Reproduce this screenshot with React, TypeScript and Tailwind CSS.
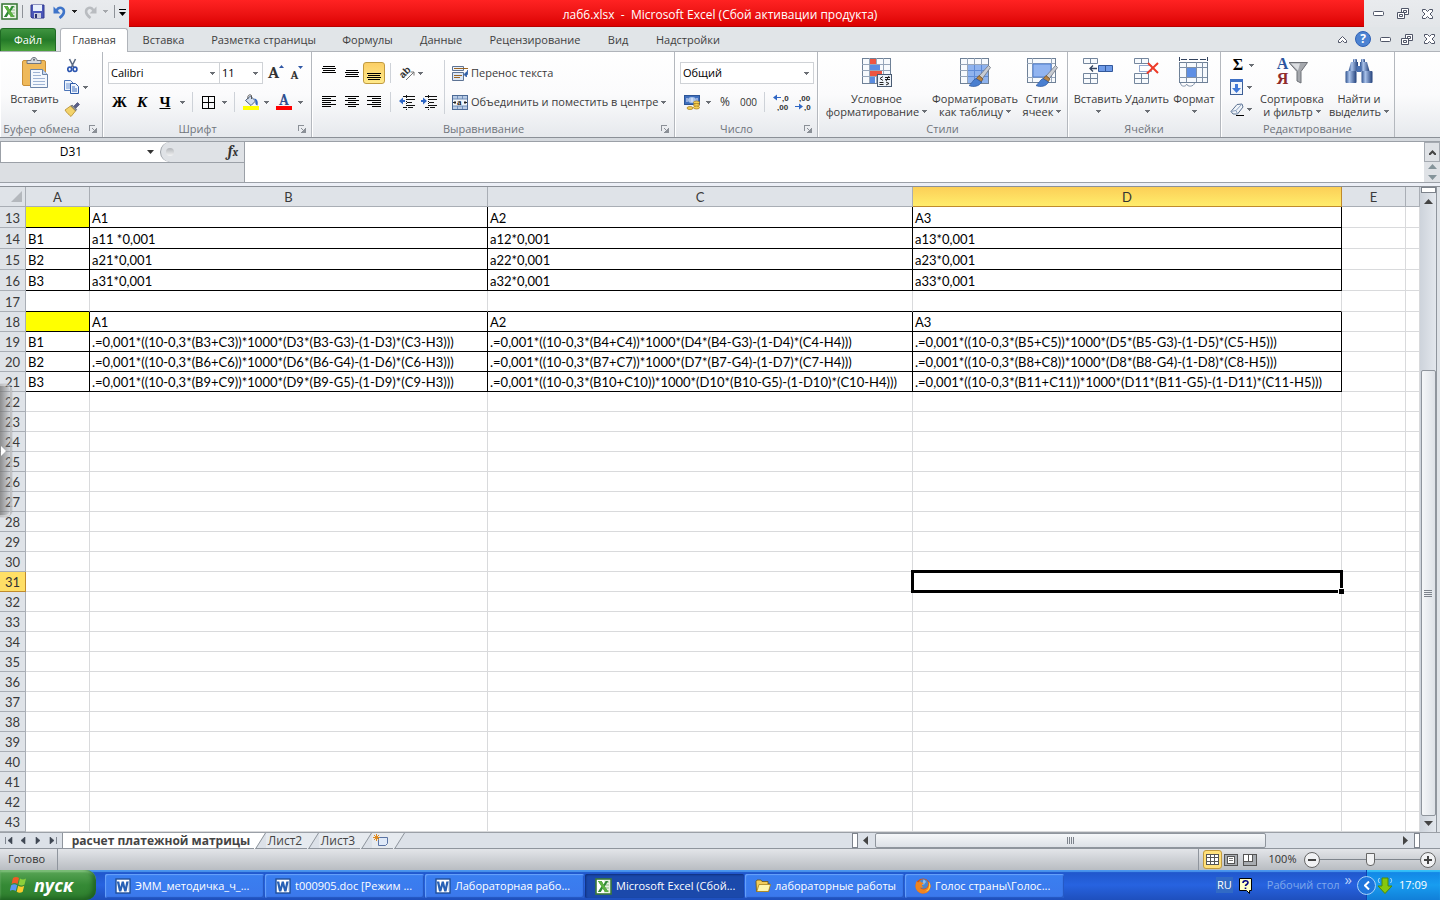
import React from "react";
import clsx from "clsx";

interface SheetRow {
  num: number;
  bordered?: boolean;
  cells?: string[];
}

const COLUMNS = ["A", "B", "C", "D", "E", ""];

const ROWS: SheetRow[] = [
  { num: 13, bordered: true, cells: ["", "A1", "A2", "A3"] },
  { num: 14, bordered: true, cells: ["B1", "a11 *0,001", "a12*0,001", "a13*0,001"] },
  { num: 15, bordered: true, cells: ["B2", "a21*0,001", "a22*0,001", "a23*0,001"] },
  { num: 16, bordered: true, cells: ["B3", "a31*0,001", "a32*0,001", "a33*0,001"] },
  { num: 17 },
  { num: 18, bordered: true, cells: ["", "A1", "A2", "A3"] },
  {
    num: 19,
    bordered: true,
    cells: [
      "B1",
      ".=0,001*((10-0,3*(B3+C3))*1000*(D3*(B3-G3)-(1-D3)*(C3-H3)))",
      ".=0,001*((10-0,3*(B4+C4))*1000*(D4*(B4-G3)-(1-D4)*(C4-H4)))",
      ".=0,001*((10-0,3*(B5+C5))*1000*(D5*(B5-G3)-(1-D5)*(C5-H5)))",
    ],
  },
  {
    num: 20,
    bordered: true,
    cells: [
      "B2",
      ".=0,001*((10-0,3*(B6+C6))*1000*(D6*(B6-G4)-(1-D6)*(C6-H3)))",
      ".=0,001*((10-0,3*(B7+C7))*1000*(D7*(B7-G4)-(1-D7)*(C7-H4)))",
      ".=0,001*((10-0,3*(B8+C8))*1000*(D8*(B8-G4)-(1-D8)*(C8-H5)))",
    ],
  },
  {
    num: 21,
    bordered: true,
    cells: [
      "B3",
      ".=0,001*((10-0,3*(B9+C9))*1000*(D9*(B9-G5)-(1-D9)*(C9-H3)))",
      ".=0,001*((10-0,3*(B10+C10))*1000*(D10*(B10-G5)-(1-D10)*(C10-H4)))",
      ".=0,001*((10-0,3*(B11+C11))*1000*(D11*(B11-G5)-(1-D11)*(C11-H5)))",
    ],
  },
  ...Array.from({ length: 22 }, (_, i) => ({ num: 22 + i })),
];

const RIBBON_TABS = [
  { label: "Вставка", width: "w-[69px]" },
  { label: "Разметка страницы", width: "w-[131px]" },
  { label: "Формулы", width: "w-[77px]" },
  { label: "Данные", width: "w-[70px]" },
  { label: "Рецензирование", width: "w-[118px]" },
  { label: "Вид", width: "w-[48px]" },
  { label: "Надстройки", width: "w-[92px]" },
];

// ---------- Icons ----------

const Caret = ({ className = "text-[#6b6f75]" }: { className?: string }) => (
  <svg width="5" height="3" viewBox="0 0 5 3" className={clsx("shrink-0", className)} shapeRendering="crispEdges">
    <path d="M0 0h5v1h-1v1h-1v1h-1v-1h-1v-1h-1z" fill="currentColor" />
  </svg>
);

const ExcelIcon = () => (
  <svg width="17" height="17" viewBox="0 0 17 17" className="shrink-0">
    <rect x="1" y="1" width="15" height="15" fill="#fff" stroke="#3c7a3a" strokeWidth="1.6" />
    <path d="M9 2h6v13H9z" fill="#e6f1e1" />
    <path d="M11 4h3M11 7h3M11 10h3M11 13h3" stroke="#8fb98a" />
    <path d="M3 3h3.600l2 3.400L10.600 3h2.600L9.800 8.400l3.600 5.600H10L7.900 10.600 5.800 14H2.800l3.700-5.700z" fill="#2f8a35" />
    <path d="M3 3h3.400l7 11H10z" fill="#5db142" />
  </svg>
);

const WordIcon = () => (
  <svg width="16" height="16" viewBox="0 0 16 16" className="shrink-0">
    <rect x="1" y="1" width="14" height="14" fill="#fff" stroke="#1f4f9b" strokeWidth="1.400" />
    <path d="M13 4h1.500M13 6h1.500M13 8h1.500M13 10h1.500M13 12h1.500" stroke="#9db9df" />
    <path d="M1.800 3.500h2.500l1 5.500L6.700 3.500h2.200L10.200 9l1.100-5.500h2.300L11.500 13.500H9.200L7.800 8.300 6.300 13.500H4z" fill="#2660b5" />
  </svg>
);

const FolderIcon = () => (
  <svg width="16" height="16" viewBox="0 0 16 16" className="shrink-0">
    <path d="M1 3.500 2 2h4l1 1.500h6V6h2l-1.500 7.500H1.500z" fill="#f3cd5a" stroke="#6b5210" strokeWidth=".8" />
    <path d="M4 6.500h11.500L13.500 13.500H1.800z" fill="#fff6ae" stroke="#a8811c" strokeWidth=".8" />
  </svg>
);

const FirefoxIcon = () => (
  <svg width="16" height="16" viewBox="0 0 16 16" className="shrink-0">
    <circle cx="8" cy="8" r="7.500" fill="#d9520c" />
    <circle cx="8.500" cy="6" r="4.800" fill="#4a86cf" />
    <path d="M8.500 1.500c1.500.5 2.500 1.500 2.300 3-.8.300-1.300 1-1.300 1.800L7 7z" fill="#8fc0ee" />
    <path d="M1.500 3c-.5 2-1.500 4-.8 7C1.700 13.500 5 15.500 8.500 15.500c4 0 7-3.500 7-7.500 0-2-1-4-2-4.500 .8 3.500-.5 7.500-4.500 8-2 .2-3.500-.8-4-2 1 .3 2.500.2 3.500-.8-1.500-.2-2-1-1.500-2 .4-.7 1.500-.8 1.800-1.700C7 4.500 6 4.500 5.500 3.500 4.500 3.500 4 4 3.500 4.300 2.500 4.300 1.800 3.800 1.500 3z" fill="#ef8420" />
    <path d="M13.500 4c1.500 3 .8 8-3.500 9.500 3.500 0 5.300-3 5.300-5.500 0-1.700-.8-3.500-1.800-4z" fill="#fbd04a" />
  </svg>
);

const SaveIcon = () => (
  <svg width="15" height="15" viewBox="0 0 15 15">
    <path d="M1 1h13v13H2L1 13z" fill="#4a56b8" stroke="#323b8f" />
    <rect x="3" y="1" width="9" height="6" fill="#e8f0fb" />
    <rect x="4" y="9" width="7" height="5" fill="#c9cede" />
    <rect x="5" y="10" width="2" height="4" fill="#2b3270" />
  </svg>
);

const UndoIcon = ({ redo }: { redo?: boolean }) => (
  <svg width="13" height="14" viewBox="0 0 13 14" className={redo ? "-scale-x-100" : ""}>
    <path d="M3.500 5.500C6 1 11.500 2.500 10.800 7.500 10.500 10 8.500 11.500 6.500 13" fill="none" stroke={redo ? "#b9bcc0" : "#3e74c9"} strokeWidth="2.600" />
    <path d="M.5 1.500v7h7z" fill={redo ? "#b9bcc0" : "#3e74c9"} />
  </svg>
);

const PasteIcon = () => (
  <svg width="28" height="32" viewBox="0 0 28 32">
    <rect x="1.500" y="3.500" width="23" height="25" rx="1.500" fill="#efb95a" stroke="#c98f36" />
    <path d="M6 6.500v-3h4c0-4 6-4 6 0h4v3z" fill="#d5d9df" stroke="#6f7680" />
    <circle cx="13" cy="2.800" r="1" fill="#5b616b" />
    <path d="M9.500 12.500h12l5 5v13h-17z" fill="#f4f8fd" stroke="#6b84a8" />
    <path d="M21.500 12.500v5h5" fill="#c9d8ee" stroke="#6b84a8" />
    <path d="M12 15.500h7M12 18.500h8M12 21.500h12M12 24.500h12M12 27.500h12" stroke="#9fb4d4" />
  </svg>
);

const CutIcon = () => (
  <svg width="11" height="15" viewBox="0 0 11 15">
    <path d="M2.500 1l4.500 9M8.500 1L4 10" stroke="#5b6b84" strokeWidth="1.600" />
    <ellipse cx="2.700" cy="11.300" rx="1.900" ry="2.200" fill="none" stroke="#2c56b0" strokeWidth="1.700" />
    <ellipse cx="8" cy="11.300" rx="1.900" ry="2.200" fill="none" stroke="#2c56b0" strokeWidth="1.700" />
  </svg>
);

const CopyIcon = () => (
  <svg width="16" height="14" viewBox="0 0 16 14">
    <path d="M.5.500h6l2.500 2.500v7.500H.5z" fill="#eef4fc" stroke="#4d75b8" />
    <path d="M2 4h4M2 6h4M2 8h4" stroke="#6f95d3" />
    <path d="M6.500 3.500h5l3 3v7h-8z" fill="#eef4fc" stroke="#2d5aa8" />
    <path d="M8 7h3M8 9h5M8 11h5" stroke="#3e6fc0" />
  </svg>
);

const BrushIcon = () => (
  <svg width="16" height="15" viewBox="0 0 16 15">
    <path d="M10 4l3.500-3.500 2 2L12 6z" fill="#5a5f8a" stroke="#3c4060" strokeWidth=".6" />
    <path d="M6.500 4l2-.7 4 4-1 1.800z" fill="#8d93a2" stroke="#454a58" strokeWidth=".7" />
    <path d="M1 8l5.500-4 5 5-4.500 5.500C5 12.500 3 11.500 1 8z" fill="#f3d36b" stroke="#b48a2b" strokeWidth=".8" />
  </svg>
);

const FontSizeIcon = ({ shrink }: { shrink?: boolean }) => (
  <span className="flex items-start">
    <span className={clsx("font-serif font-bold text-[#333]", shrink ? "pt-[4px] text-[12px] leading-[14px]" : "text-[17px] leading-[20px]")}>A</span>
    <svg width="5" height="3" viewBox="0 0 5 3" className={clsx("mt-[2px]", shrink && "rotate-180")}>
      <path d="M0 3 2.500 0 5 3z" fill="#2f57a5" />
    </svg>
  </span>
);

const BordersIcon = () => (
  <svg width="13" height="13" viewBox="0 0 13 13" shapeRendering="crispEdges">
    <path d="M.5.500h12v12H.5zM6.500 0v13M0 6.500h13" fill="none" stroke="#000" />
  </svg>
);

const FillIcon = () => (
  <svg width="16" height="16" viewBox="0 0 16 16">
    <path d="M2.500 6.500 7.500 2l5 5L8 11.500z" fill="#d3deee" stroke="#4a5f80" />
    <path d="M5 5c-1-4 2-5 3.500-3.500V5" fill="none" stroke="#555" />
    <path d="M11 4.500c3 0 4.500 3 3.500 7-2-.5-2.500-2-2-4.500z" fill="#3468bd" />
    <rect y="12" width="16" height="4" fill="#ff0" />
  </svg>
);

const FontColorIcon = () => (
  <span className="flex w-[16px] flex-col items-center">
    <span className="font-serif text-[15px] font-bold leading-[12px] text-[#2f4f8f]">A</span>
    <span className="h-[4px] w-full bg-[#f00]" />
  </span>
);

const LINES = {
  top: "M1 .5h12M0 2.500h14M1 4.500h12M0 6.500h14",
  middle: "M1 4.500h12M0 6.500h14M1 8.500h12M0 10.500h14",
  bottom: "M0 7.500h14M1 9.500h12M0 11.500h14M1 13.500h12",
  left: "M0 1.500h14M0 3.500h9M0 5.500h14M0 7.500h9M0 9.500h14M0 11.500h9",
  center: "M0 1.500h14M3 3.500h8M0 5.500h14M3 7.500h8M0 9.500h14M3 11.500h8",
  right: "M0 1.500h14M5 3.500h9M0 5.500h14M5 7.500h9M0 9.500h14M5 11.500h9",
};

const LinesIcon = ({ kind }: { kind: keyof typeof LINES }) => (
  <svg width="14" height="14" viewBox="0 0 14 14" shapeRendering="crispEdges">
    <path d={LINES[kind]} stroke="#000" />
  </svg>
);

const IndentIcon = ({ increase }: { increase?: boolean }) => (
  <svg width="16" height="15" viewBox="0 0 16 15">
    <path d="M4 1.500h12M8 4.500h8M8 7.500h5M8 10.500h8M4 12.500h4M9 12.500h5" stroke="#111" strokeWidth="1.500" shapeRendering="crispEdges" />
    <path d="M7.500 0v15" stroke="#111" strokeDasharray="1 1" />
    <path d={increase ? "M0 5h2V2.500L6 6 2 9.500V7H0z" : "M6 5H4V2.500L0 6l4 3.500V7h2z"} fill="#2f66c4" />
  </svg>
);

const OrientationIcon = () => (
  <svg width="16" height="16" viewBox="0 0 16 16">
    <text x="0" y="12" fontSize="10" fontWeight="bold" fontFamily="Liberation Sans, sans-serif" transform="rotate(-45 4 8)" fill="#333">ab</text>
    <path d="M7 15l8-8M15 10.500V7h-3.500" fill="none" stroke="#777" />
  </svg>
);

const WrapIcon = () => (
  <svg width="16" height="15" viewBox="0 0 16 15">
    <path d="M.5.500h11v4H.5z" fill="#eaf1fa" stroke="#5d7394" />
    <path d="M2 2.500h14" stroke="#9a6524" />
    <path d="M.5 6.500h11v8H.5z" fill="#dbe7f6" stroke="#5d7394" />
    <path d="M2 9.500h8M2 11.500h6" stroke="#9a6524" />
    <path d="M15.500 4v4.500H13M14.500 6v5L12 8.500z" stroke="#2f5fa8" fill="#2f5fa8" strokeWidth=".8" />
  </svg>
);

const MergeIcon = () => (
  <svg width="16" height="15" viewBox="0 0 16 15">
    <rect x=".5" y=".5" width="15" height="14" fill="#b9cce6" stroke="#4c6a96" />
    <path d="M1 4h14v7H1z" fill="#f2f6fb" />
    <path d="M5.500 1v3M10.500 1v3M5.500 11v3M10.500 11v3M1 4h14M1 11h14" stroke="#6f8db8" />
    <text x="5" y="10" fontSize="9" fontWeight="bold" fontFamily="Liberation Serif, serif" fill="#222">a</text>
    <path d="M1 7.500h3M12 7.500h3M3 6v3M13 6v3" stroke="#222" />
  </svg>
);

const MoneyIcon = () => (
  <svg width="17" height="17" viewBox="0 0 17 17">
    <rect x=".5" y="1.500" width="15" height="9" fill="#3f6fbd" stroke="#2d5596" />
    <ellipse cx="8" cy="6" rx="4" ry="3" fill="#a9c4ea" />
    <path d="M3 4v4M8 4v4M13 4v4" stroke="#eef" />
    <ellipse cx="12.500" cy="8.500" rx="3" ry="1.500" fill="#f4cf55" stroke="#a87a16" strokeWidth=".7" />
    <ellipse cx="12.500" cy="11" rx="3" ry="1.500" fill="#f4cf55" stroke="#a87a16" strokeWidth=".7" />
    <ellipse cx="12.500" cy="13.500" rx="3" ry="1.500" fill="#f4cf55" stroke="#a87a16" strokeWidth=".7" />
    <ellipse cx="6" cy="14" rx="3" ry="1.500" fill="#f4cf55" stroke="#a87a16" strokeWidth=".7" />
  </svg>
);

const DecimalIcon = ({ less }: { less?: boolean }) => (
  <svg width="17" height="17" viewBox="0 0 17 17" fontFamily="Liberation Sans, sans-serif" fontSize="8" fontWeight="bold" fill="#333">
    <text x={less ? "4" : "9"} y="7">{less ? ",00" : ",0"}</text>
    <text x={less ? "9" : "4"} y="16">{less ? ",0" : ",00"}</text>
    <path d={less ? "M0 12h4V9.500l4 3-4 3V13H0z" : "M8 3H4V.5l-4 3 4 3V4h4z"} fill="#2f66c4" />
  </svg>
);

const GridBase = () => (
  <>
    <rect x="1.500" y="1.500" width="28" height="25" fill="#f7fafd" stroke="#6f8197" />
    <path d="M1 7.500h28M1 13.500h28M1 19.500h28M8.500 1v25M15.500 1v25M22.500 1v25" stroke="#97a6ba" />
  </>
);

const Brush = () => (
  <>
    <path d="M29.500 8.500l2 2-8 11-3.500-2.500z" fill="#c8ccd2" stroke="#6d7480" strokeWidth=".8" />
    <path d="M20 18.500l4 3.500-2 3-5-3z" fill="#b78445" stroke="#6e4b1e" strokeWidth=".7" />
    <path d="M17 21.500c-3 1-4 5-7 7 4 2 10.500 1 12.500-3.500z" fill="#4a7fd0" stroke="#2a559c" strokeWidth=".7" />
  </>
);

const ConditionalIcon = () => (
  <svg width="32" height="30" viewBox="0 0 32 30">
    <GridBase />
    <path d="M9 2h6v5H9zM9 14h12v5H9z" fill="#ee5540" />
    <path d="M9 8h10v5H9zM9 20h5v6H9z" fill="#5a8ce0" />
    <rect x="16.500" y="17.500" width="14" height="12" fill="#eef3f9" stroke="#4a5b72" />
    <path d="M22 19.500l-3 2 3 2M18.500 25.500h4M18.500 27.500h4M24 20.500h5M24 22.500h5M28 19l-3 5M25 25l3 1.500-3 1.500" fill="none" stroke="#222" />
  </svg>
);

const FormatTableIcon = () => (
  <svg width="32" height="30" viewBox="0 0 32 30">
    <GridBase />
    <path d="M9 8h20v18H9z" fill="#8fb3ee" />
    <path d="M9 13.500h20M9 19.500h20M15.500 8v18M22.500 8v18" stroke="#5f8bd6" />
    <Brush />
  </svg>
);

const CellStylesIcon = () => (
  <svg width="32" height="30" viewBox="0 0 32 30">
    <rect x="1.500" y="1.500" width="28" height="24" fill="#f7fafd" stroke="#6f8197" />
    <path d="M1 6.500h28M1 20.500h28M6.500 1v24M25.500 1v24" stroke="#97a6ba" />
    <path d="M7 7h18v13H7z" fill="#91b4f0" stroke="#4f7fd0" />
    <Brush />
  </svg>
);

const TwoTables = () => (
  <path d="M1.500 1.500h14v5h-14zM8.500 1.500v5M1.500 16.500h14v10h-14zM8.500 16.500v10M1.500 21.500h14" fill="#f7fafd" stroke="#74869d" />
);

const InsertCellsIcon = () => (
  <svg width="32" height="30" viewBox="0 0 32 30">
    <TwoTables />
    <path d="M16.500 8.500h14v6h-14z" fill="#6f9be8" stroke="#33599c" />
    <path d="M23.500 9v5" stroke="#33599c" />
    <path d="M15 11.500H8M11 8.500l-3 3 3 3" fill="none" stroke="#33435e" strokeWidth="1.300" />
  </svg>
);

const DeleteCellsIcon = () => (
  <svg width="28" height="30" viewBox="0 0 28 30">
    <TwoTables />
    <path d="M6.500 8.500h12v6h-12z" fill="none" stroke="#2d55a0" strokeDasharray="1 1" />
    <path d="M15 6l10 10M25 6L14 16.500" stroke="#ee3b28" strokeWidth="2" />
  </svg>
);

const FormatCellsIcon = () => (
  <svg width="32" height="31" viewBox="0 0 32 31">
    <path d="M1.500 0v4M29.500 0v4M3 2.500h6M11 2.500h9M22 2.500h6" stroke="#33435e" />
    <rect x="1.500" y="5.500" width="28" height="20" fill="#f7fafd" stroke="#6f8197" />
    <path d="M1 10.500h28M1 20.500h28M8.500 5v20M18.500 5v20M24.500 5v20M2.500 26c0 4 6 4 6 1 1 3 7 3 8-1" fill="none" stroke="#7f90a7" />
    <path d="M9 11h9v9H9z" fill="#5e8fe4" />
  </svg>
);

const FillDownIcon = () => (
  <svg width="14" height="16" viewBox="0 0 14 16">
    <rect x=".5" y=".5" width="12" height="15" fill="#f0f5fc" stroke="#3d5f95" />
    <path d="M0 0h13v3H0z" fill="#3d6fc4" />
    <path d="M5 5h3v4h3l-4.500 5L2 9h3z" fill="#3f78d8" />
  </svg>
);

const EraserIcon = () => (
  <svg width="15" height="13" viewBox="0 0 15 13">
    <path d="M1 8.500 7 1.500l5-.5 1 3L7.500 11H3z" fill="#f1f5fa" stroke="#5c7291" />
    <path d="M1 8.500l5-1L12 1M6 7.500 7.500 11" fill="none" stroke="#8ba0bf" />
    <path d="M6 12.500h8" stroke="#000" />
  </svg>
);

const SortIcon = () => (
  <span className="flex h-[30px] w-[32px]">
    <span className="flex w-[13px] flex-col items-center font-serif text-[16px] font-bold leading-[15px]">
      <span className="text-[#2b559f]">А</span>
      <span className="text-[#8f2b2b]">Я</span>
    </span>
    <svg width="19" height="28" viewBox="0 0 19 28">
      <path d="M0 5.500h18.500L12 14.500V26l-4-2V14.500z" fill="#a5a8ad" stroke="#6d7076" />
      <path d="M2 6.500h9l-2 7z" fill="#dcdee1" />
    </svg>
  </span>
);

const BinocularsIcon = () => (
  <svg width="30" height="30" viewBox="0 0 30 30">
    <defs>
      <linearGradient id="lens" x1="0" x2="1">
        <stop offset="0" stopColor="#2f528e" />
        <stop offset=".35" stopColor="#a9c2ea" />
        <stop offset="1" stopColor="#22407a" />
      </linearGradient>
    </defs>
    <rect x="9" y="2" width="4" height="4" rx="1" fill="url(#lens)" />
    <rect x="17" y="2" width="4" height="4" rx="1" fill="url(#lens)" />
    <path d="M7 5h7v9H4.500z" fill="url(#lens)" />
    <path d="M16 5h7l2.500 9H16z" fill="url(#lens)" />
    <rect x="12.500" y="9" width="5" height="6" fill="#4a70b0" />
    <rect x="1.500" y="14" width="11" height="12" rx="1" fill="url(#lens)" />
    <rect x="17.500" y="14" width="11" height="12" rx="1" fill="url(#lens)" />
  </svg>
);

const MinimizeIcon = () => (
  <svg width="11" height="5" viewBox="0 0 11 5">
    <rect x=".5" y=".5" width="10" height="4" rx="1" fill="#fff" stroke="#4f5567" />
  </svg>
);

const RestoreIcon = () => (
  <svg width="12" height="11" viewBox="0 0 12 11">
    <path d="M4.500.500h7v6h-7z" fill="#fff" stroke="#4f5567" />
    <path d="M6.500 2.500h3v2h-3z" fill="none" stroke="#4f5567" />
    <path d="M.5 4.500h7v6h-7z" fill="#fff" stroke="#4f5567" />
    <path d="M2.500 6.500h3v2h-3z" fill="none" stroke="#4f5567" />
  </svg>
);

const CloseIcon = () => (
  <svg width="11" height="10" viewBox="0 0 11 10">
    <path d="M.5.500h3l2 2 2-2h3v2L8 5l2.500 2.500v2h-3l-2-2-2 2h-3v-2L3 5 .5 2.500z" fill="#fff" stroke="#4f5567" />
  </svg>
);

const WindowsFlag = () => (
  <svg width="20" height="18" viewBox="0 0 20 18" className="shrink-0">
    <path d="M3 2c2-1.500 4-1.500 6 0L7.500 8c-2-1.300-4-1.300-6 0z" fill="#ee5b26" />
    <path d="M10 2.500c2 1.300 4 1.300 6 0L14.500 8.500c-2 1.300-4 1.300-6 0z" fill="#8bcf3b" />
    <path d="M1.200 9.300c2-1.500 4-1.500 6 0L5.700 15c-2-1.300-4-1.300-6 0z" fill="#5a96f0" />
    <path d="M8.200 9.800c2 1.300 4 1.300 6 0l-1.500 6c-2 1.300-4 1.300-6 0z" fill="#fbcb2d" />
  </svg>
);

// ---------- Ribbon pieces ----------

interface GroupProps {
  label: string;
  className: string;
  launcher?: boolean;
  children: React.ReactNode;
}

const RibbonGroup = ({ label, className, launcher, children }: GroupProps) => (
  <section
    aria-label={label}
    className={clsx("flex shrink-0 flex-col border-r border-[#b4b8be] shadow-[inset_1px_0_0_#fff]", className)}
  >
    <div className="flex h-[69px] items-start">{children}</div>
    <div className="flex h-[16px] items-center">
      <span className={clsx("flex-1 text-center text-[11px] leading-[16px] text-[#70757c]", launcher && "pr-[6px]")}>{label}</span>
      {launcher && (
        <button aria-label={`${label}: параметры`} className="mr-[5px]">
          <svg width="8" height="8" viewBox="0 0 8 8" shapeRendering="crispEdges">
            <path d="M.5 6V.5H6" fill="none" stroke="#8b9097" />
            <path d="M3 3l2 2" stroke="#8b9097" />
            <path d="M7 4v3H4z" fill="#8b9097" stroke="#8b9097" />
          </svg>
        </button>
      )}
    </div>
  </section>
);

interface BigButtonProps {
  icon: React.ReactNode;
  lines: string[];
  className: string;
}

const BigButton = ({ icon, lines, className }: BigButtonProps) => (
  <button className={clsx("flex shrink-0 flex-col items-center whitespace-nowrap pt-[5px] text-[11px] leading-[13px] text-[#3b3b3b]", className)}>
    <span className="flex h-[35px] items-start justify-center">{icon}</span>
    <span>{lines[0]}</span>
    <span className="flex h-[13px] items-center gap-[3px]">
      {lines[1]}
      <Caret />
    </span>
  </button>
);

interface ToolProps {
  label: string;
  className: string;
  children: React.ReactNode;
}

const Tool = ({ label, className, children }: ToolProps) => (
  <button aria-label={label} title={label} className={clsx("flex h-[22px] shrink-0 items-center justify-center", className)}>
    {children}
  </button>
);

const Divider = () => <span className="mx-[5px] h-[20px] w-px shrink-0 bg-[#ced2d8]" />;

interface ComboProps {
  label: string;
  value: string;
  className: string;
}

const Combo = ({ label, value, className }: ComboProps) => (
  <div className={clsx("relative h-[22px] shrink-0 border border-[#cfd2d6] bg-white", className)}>
    <select aria-label={label} className="block h-[20px] w-full appearance-none bg-transparent pl-[2px] text-[11px] leading-[20px] text-black outline-none">
      <option>{value}</option>
    </select>
    <span className="pointer-events-none absolute right-[4px] top-[9px] flex">
      <Caret />
    </span>
  </div>
);

const TitleBar = () => (
  <header className="flex h-[27px] bg-gradient-to-b from-[#e9ebee] to-[#e3e6e9]">
    <div className="flex w-[129px] shrink-0 items-center pb-[4px] pl-px">
      <ExcelIcon />
      <span className="ml-[4px] mr-[7px] h-[13px] w-px bg-[#8d9197]" />
      <button aria-label="Сохранить"><SaveIcon /></button>
      <button aria-label="Отменить" className="ml-[8px]"><UndoIcon /></button>
      <Caret className="ml-[6px] text-[#222]" />
      <button aria-label="Вернуть" className="ml-[7px]"><UndoIcon redo /></button>
      <Caret className="ml-[6px] text-[#a5a8ac]" />
      <span className="ml-[6px] h-[13px] w-px bg-[#8d9197]" />
      <button aria-label="Настройка панели" className="ml-[4px] flex flex-col items-center gap-[2px] pt-[1px]">
        <span className="h-px w-[7px] bg-black" />
        <svg width="7" height="4" viewBox="0 0 7 4"><path d="M0 0h7L3.500 4z" /></svg>
      </button>
    </div>
    <h1 className="flex-1 whitespace-pre border-b border-[#b80000] bg-gradient-to-b from-[#ff2222] to-[#dc0000] pr-[53px] text-center text-[12px] leading-[29px] text-white">
      {"лаб6.xlsx  -  Microsoft Excel (Сбой активации продукта)"}
    </h1>
    <div className="flex w-[76px] shrink-0 items-center justify-end gap-[13px] pr-[7px]">
      <button aria-label="Свернуть"><MinimizeIcon /></button>
      <button aria-label="Восстановить"><RestoreIcon /></button>
      <button aria-label="Закрыть"><CloseIcon /></button>
    </div>
  </header>
);

const TabBar = () => (
  <nav className="flex h-[25px] items-end border-b border-[#b0b4ba] bg-[#e1e5e8] text-[11px] text-[#3f3f3f]">
    <button className="h-[23px] w-[56px] rounded-t-[3px] border border-b-0 border-[#1f6a24] bg-gradient-to-b from-[#3f9440] via-[#237a28] to-[#4aa23c] pt-px text-white">Файл</button>
    <button className="-mb-px ml-[4px] h-[24px] w-[68px] rounded-t-[3px] border border-b-0 border-[#b0b4ba] bg-white">Главная</button>
    <div className="ml-px flex flex-1">
      {RIBBON_TABS.map((tab) => (
        <button key={tab.label} className={clsx("h-[22px] shrink-0 whitespace-nowrap", tab.width)}>{tab.label}</button>
      ))}
    </div>
    <div className="flex h-[24px] items-center pr-[5px]">
      <button aria-label="Свернуть ленту" className="mr-[8px]">
        <svg width="9" height="7" viewBox="0 0 9 7"><path d="M.5 6.500v-2l4-4 4 4v2h-2l-2-2-2 2z" fill="#fff" stroke="#4f5567" /></svg>
      </button>
      <button aria-label="Справка" className="mr-[9px] flex h-[16px] w-[16px] items-center justify-center rounded-full border border-[#2f61b5] bg-[#4c83d2] text-[12px] font-bold leading-[14px] text-white">?</button>
      <button aria-label="Свернуть книгу" className="mr-[10px]"><MinimizeIcon /></button>
      <button aria-label="Восстановить книгу" className="mr-[11px]"><RestoreIcon /></button>
      <button aria-label="Закрыть книгу"><CloseIcon /></button>
    </div>
  </nav>
);

const Ribbon = () => (
  <div className="flex h-[86px] overflow-hidden border-b border-[#8b9097] bg-gradient-to-b from-white via-[#fbfbfc] to-[#e6e9ed]">
    <RibbonGroup label="Буфер обмена" className="w-[103px]" launcher>
      <BigButton icon={<PasteIcon />} lines={["Вставить"]} className="ml-[8px] w-[53px]" />
      <div className="flex flex-col pt-[2px]">
        <Tool label="Вырезать" className="w-[22px]"><CutIcon /></Tool>
        <div className="flex items-center">
          <Tool label="Копировать" className="w-[22px]"><CopyIcon /></Tool>
          <Caret className="text-[#6b6f75]" />
        </div>
        <Tool label="Формат по образцу" className="w-[22px]"><BrushIcon /></Tool>
      </div>
    </RibbonGroup>

    <RibbonGroup label="Шрифт" className="w-[209px]" launcher>
      <div className="flex flex-col gap-[7px] pl-[5px] pt-[10px]">
        <div className="flex">
          <Combo label="Шрифт" value="Calibri" className="w-[112px]" />
          <Combo label="Размер шрифта" value="11" className="-ml-px w-[44px]" />
          <Tool label="Увеличить размер" className="ml-[2px] w-[22px]"><FontSizeIcon /></Tool>
          <Tool label="Уменьшить размер" className="w-[20px]"><FontSizeIcon shrink /></Tool>
        </div>
        <div className="flex items-center font-serif text-[15px] font-bold text-black">
          <Tool label="Полужирный" className="w-[23px]"><b>Ж</b></Tool>
          <Tool label="Курсив" className="w-[22px]"><i>К</i></Tool>
          <Tool label="Подчеркнутый" className="w-[24px]"><u>Ч</u></Tool>
          <Tool label="Вид подчеркивания" className="w-[10px]"><Caret /></Tool>
          <Divider />
          <Tool label="Границы" className="w-[21px]"><BordersIcon /></Tool>
          <Tool label="Вид границ" className="w-[10px]"><Caret /></Tool>
          <Divider />
          <Tool label="Заливка" className="w-[21px]"><FillIcon /></Tool>
          <Tool label="Цвет заливки" className="w-[10px]"><Caret /></Tool>
          <Tool label="Цвет текста" className="ml-px w-[24px]"><FontColorIcon /></Tool>
          <Tool label="Выбор цвета" className="w-[8px]"><Caret /></Tool>
        </div>
      </div>
    </RibbonGroup>

    <RibbonGroup label="Выравнивание" className="w-[363px]" launcher>
      <div className="flex flex-col gap-[7px] pl-[5px] pt-[10px]">
        <div className="flex items-center">
          <Tool label="По верхнему краю" className="w-[23px]"><LinesIcon kind="top" /></Tool>
          <Tool label="По середине" className="w-[23px]"><LinesIcon kind="middle" /></Tool>
          <Tool label="По нижнему краю" className="w-[22px] rounded-[3px] border border-[#c29b3f] bg-gradient-to-b from-[#fbcf66] to-[#ffe98a]"><LinesIcon kind="bottom" /></Tool>
          <Divider />
          <Tool label="Ориентация" className="w-[22px]"><OrientationIcon /></Tool>
          <Caret />
        </div>
        <div className="flex items-center">
          <Tool label="По левому краю" className="w-[23px]"><LinesIcon kind="left" /></Tool>
          <Tool label="По центру" className="w-[23px]"><LinesIcon kind="center" /></Tool>
          <Tool label="По правому краю" className="w-[22px]"><LinesIcon kind="right" /></Tool>
          <Divider />
          <Tool label="Уменьшить отступ" className="w-[22px]"><IndentIcon /></Tool>
          <Tool label="Увеличить отступ" className="w-[22px]"><IndentIcon increase /></Tool>
        </div>
      </div>
      <span className="ml-[4px] mt-[8px] h-[54px] w-px bg-[#ced2d8]" />
      <div className="flex flex-col items-start gap-[7px] pl-[7px] pt-[10px] text-[11px] text-[#3b3b3b]">
        <button className="flex h-[22px] items-center gap-[3px] whitespace-nowrap"><WrapIcon />Перенос текста</button>
        <button className="flex h-[22px] items-center gap-[3px] whitespace-nowrap"><MergeIcon />Объединить и поместить в центре<Caret /></button>
      </div>
    </RibbonGroup>

    <RibbonGroup label="Число" className="w-[143px]" launcher>
      <div className="flex flex-col gap-[7px] pl-[5px] pt-[10px]">
        <Combo label="Числовой формат" value="Общий" className="w-[134px]" />
        <div className="flex items-center text-[12px] text-[#333]">
          <Tool label="Финансовый формат" className="w-[24px]"><MoneyIcon /></Tool>
          <Tool label="Выбор валюты" className="w-[8px]"><Caret /></Tool>
          <Tool label="Процентный формат" className="w-[26px]">%</Tool>
          <Tool label="Формат с разделителями" className="w-[21px] text-[10px]">000</Tool>
          <Divider />
          <Tool label="Увеличить разрядность" className="w-[22px]"><DecimalIcon /></Tool>
          <Tool label="Уменьшить разрядность" className="w-[22px]"><DecimalIcon less /></Tool>
        </div>
      </div>
    </RibbonGroup>

    <RibbonGroup label="Стили" className="w-[250px]">
      <BigButton icon={<ConditionalIcon />} lines={["Условное", "форматирование"]} className="ml-[5px] w-[107px]" />
      <BigButton icon={<FormatTableIcon />} lines={["Форматировать", "как таблицу"]} className="w-[90px]" />
      <BigButton icon={<CellStylesIcon />} lines={["Стили", "ячеек"]} className="w-[44px]" />
    </RibbonGroup>

    <RibbonGroup label="Ячейки" className="w-[153px]">
      <BigButton icon={<InsertCellsIcon />} lines={["Вставить"]} className="ml-[5px] w-[50px]" />
      <BigButton icon={<DeleteCellsIcon />} lines={["Удалить"]} className="w-[48px]" />
      <BigButton icon={<FormatCellsIcon />} lines={["Формат"]} className="w-[46px]" />
    </RibbonGroup>

    <RibbonGroup label="Редактирование" className="w-[174px]">
      <div className="flex flex-col pl-[6px] pt-[2px]">
        <div className="flex items-center"><Tool label="Сумма" className="w-[22px] font-serif text-[16px] font-bold">Σ</Tool><Caret /></div>
        <div className="flex items-center"><Tool label="Заполнить" className="w-[20px]"><FillDownIcon /></Tool><Caret /></div>
        <div className="flex items-center"><Tool label="Очистить" className="w-[20px]"><EraserIcon /></Tool><Caret /></div>
      </div>
      <BigButton icon={<SortIcon />} lines={["Сортировка", "и фильтр"]} className="ml-[3px] w-[70px]" />
      <BigButton icon={<BinocularsIcon />} lines={["Найти и", "выделить"]} className="w-[64px]" />
    </RibbonGroup>
  </div>
);

const FormulaBar = () => (
  <div className="mt-[3px] flex h-[42px] border-y border-[#9ba0a7]">
    <div className="flex w-[245px] shrink-0 flex-col border-r border-[#9ba0a7]">
      <div className="flex h-[21px] border-b border-[#9ba0a7] bg-[#dfe2e6]">
        <div className="flex w-[168px] items-center border-l border-[#9ba0a7] bg-white">
          <input aria-label="Имя" defaultValue="D31" className="w-[140px] bg-transparent text-center text-[12px] leading-[20px] text-black outline-none" />
          <svg width="7" height="4" viewBox="0 0 7 4" className="ml-[6px]"><path d="M0 0h7L3.500 4z" fill="#333" /></svg>
        </div>
        <div className="-ml-[8px] flex flex-1 items-center rounded-l-full border-l border-[#9ba0a7] bg-[#dfe2e6] pl-[5px]">
          <span className="h-[8px] w-[8px] rounded-full bg-gradient-to-b from-[#b3b6ba] to-[#f3f4f5]" />
          <button aria-label="Вставить функцию" className="ml-auto mr-[6px] font-serif text-[15px] font-bold italic leading-[18px] text-[#333]">
            f<span className="text-[11px]">x</span>
          </button>
        </div>
      </div>
      <div className="flex-1 bg-[#dcdfe3]" />
    </div>
    <textarea aria-label="Строка формул" className="min-w-0 flex-1 resize-none bg-white outline-none" />
    <div className="flex w-[16px] shrink-0 flex-col items-center bg-[#dfe2e6]">
      <button aria-label="Развернуть" className="flex h-[20px] w-full items-center justify-center border border-[#a5aab1]">
        <svg width="7" height="5" viewBox="0 0 7 5"><path d="M0 5V3.500L3.500 0 7 3.500V5H5.500l-2-2-2 2z" fill="#444" /></svg>
      </button>
      <svg width="9" height="16" viewBox="0 0 9 16" className="mt-[2px]"><path d="M0 5h9L4.500 0zM0 11h9l-4.500 5z" fill="#85949a" /></svg>
    </div>
  </div>
);

// ---------- Sheet ----------

const HEADER_CELL = "border-b border-r border-[#a9aeb5] bg-[#dfe3e8] p-0 text-center font-normal text-[#3a3a3a]";
const ACTIVE_HEADER = "border-b border-r border-[#c08b2c] p-0 text-center font-normal text-[#333]";

const Sheet = () => (
  <table className="w-full table-fixed border-separate border-spacing-0 font-[Lato,Carlito,sans-serif] text-[13px] leading-[18px] text-black [font-kerning:none]">
    <colgroup>
      <col className="w-[26px]" />
      <col className="w-[64px]" />
      <col className="w-[398px]" />
      <col className="w-[425px]" />
      <col className="w-[429px]" />
      <col className="w-[64px]" />
      <col />
    </colgroup>
    <thead>
      <tr className="h-[20px]">
        <th aria-label="Выделить все" className={HEADER_CELL}>
          <svg width="11" height="11" viewBox="0 0 11 11" className="ml-auto mr-[3px]"><path d="M11 0v11H0z" fill="#b4b8bd" /></svg>
        </th>
        {COLUMNS.map((col) => (
          <th key={col} className={col === "D" ? clsx(ACTIVE_HEADER, "bg-gradient-to-b from-[#fccf57] to-[#ffed6c]") : HEADER_CELL}>{col}</th>
        ))}
      </tr>
    </thead>
    <tbody>
      {ROWS.map((row) => (
        <tr key={row.num} className={row.num < 18 ? "h-[21px]" : "h-[20px]"}>
          <th className={clsx("align-bottom", row.num === 31 ? clsx(ACTIVE_HEADER, "bg-[#ffdf66]") : HEADER_CELL)}>{row.num}</th>
          {COLUMNS.map((col, i) => {
            const inTable = i < 4;
            const selected = row.num === 31 && col === "D";
            return (
              <td
                key={col}
                className={clsx(
                  "whitespace-nowrap border-b border-r p-0 pl-[2px] align-bottom",
                  inTable && (row.bordered || row.num === 17) ? "border-b-black" : "border-b-[#d9dadc]",
                  inTable && row.bordered ? "border-r-black" : "border-r-[#d9dadc]",
                  row.bordered && i === 0 && !row.cells?.[0] && "bg-[#ff0]",
                  selected && "relative",
                )}
              >
                {row.cells?.[i]}
                {selected && (
                  <span className="absolute -bottom-[2px] -left-[2px] -right-[2px] -top-[2px] border-[3px] border-black">
                    <span className="absolute -bottom-[4px] -right-[4px] h-[6px] w-[6px] border-l border-t border-white bg-black" />
                  </span>
                )}
              </td>
            );
          })}
        </tr>
      ))}
    </tbody>
  </table>
);

const VerticalScroll = () => (
  <div className="flex w-[20px] shrink-0 bg-[#dfe3e8]">
    <div className="flex w-[17px] flex-col items-center border-r border-[#8f959d] bg-gradient-to-r from-[#cdd3db] to-[#e3e7ed]">
      <span className="h-[6px] w-[15px] border border-[#7d838c] bg-white" />
      <svg width="9" height="5" viewBox="0 0 9 5" className="mt-[6px] shrink-0"><path d="M0 5h9L4.500 0z" fill="#444" /></svg>
      <div className="mb-[5px] mt-auto flex h-[446px] w-[15px] flex-col items-center justify-center gap-px rounded-[2px] border border-[#8f959d] bg-gradient-to-r from-[#f5f7f9] to-[#dde1e7]">
        <span className="h-px w-[8px] bg-[#7d838c]" />
        <span className="h-px w-[8px] bg-[#7d838c]" />
        <span className="h-px w-[8px] bg-[#7d838c]" />
        <span className="h-px w-[8px] bg-[#7d838c]" />
      </div>
      <svg width="9" height="5" viewBox="0 0 9 5" className="mb-[6px] shrink-0"><path d="M0 0h9L4.500 5z" fill="#444" /></svg>
    </div>
  </div>
);

const Slant = ({ active }: { active?: boolean }) => (
  <svg width="12" height="16" viewBox="0 0 12 16" className="shrink-0">
    <path d="M0 0h11L1 16H0z" fill={active ? "#fff" : "#e6eaef"} />
    <path d="M11.500 0l-10 16" stroke="#8f959d" />
  </svg>
);

const SheetTabs = () => (
  <div className="flex h-[17px] border-b border-t border-b-[#8f959d] border-t-[#9ba0a7] bg-[#dce1e8]">
    <div className="flex w-[63px] shrink-0 items-center justify-around border-r border-[#8f959d] px-[2px]">
      {["M.5 0v7M7 0v7L3 3.500z", "M5 0v7L1 3.500z", "M2 0v7l4-3.500z", "M7.500 0v7M1 0v7l4-3.500z"].map((d) => (
        <button key={d} aria-label="Прокрутка листов">
          <svg width="8" height="7" viewBox="0 0 8 7"><path d={d} fill="#3f4753" stroke="#3f4753" strokeWidth=".6" /></svg>
        </button>
      ))}
    </div>
    <div className="flex text-[12px] leading-[15px] text-[#444]">
      <button className="w-[191px] whitespace-nowrap bg-white pl-[5px] font-bold">расчет платежной матрицы</button>
      <Slant active />
      <button className="w-[41px] bg-[#e6eaef] pr-[3px]">Лист2</button>
      <Slant />
      <button className="w-[41px] bg-[#e6eaef] pr-[3px]">Лист3</button>
      <Slant />
      <button aria-label="Вставить лист" className="flex w-[21px] items-center justify-center bg-[#e6eaef] pr-[4px]">
        <svg width="15" height="13" viewBox="0 0 15 13">
          <path d="M5.500 3.500h9v6l-2 2h-7z" fill="#dfe9f8" stroke="#5b74a4" />
          <path d="M3.500 0v7M0 3.500h7M1 1l5 5M6 1L1 6" stroke="#e08a1e" />
        </svg>
      </button>
      <Slant />
    </div>
    <div className="ml-auto flex w-[588px] items-stretch">
      <span className="w-[6px] border border-[#7d838c] bg-white" />
      <div className="flex flex-1 items-center">
        <svg width="5" height="9" viewBox="0 0 5 9" className="ml-[5px] mr-[7px]"><path d="M5 0v9L0 4.500z" fill="#444" /></svg>
        <div className="flex h-full w-[391px] items-center justify-center gap-px rounded-[2px] border border-[#8f959d] bg-gradient-to-b from-[#f5f7f9] to-[#dde1e7]">
          <span className="h-[7px] w-px bg-[#7d838c]" />
          <span className="h-[7px] w-px bg-[#7d838c]" />
          <span className="h-[7px] w-px bg-[#7d838c]" />
          <span className="h-[7px] w-px bg-[#7d838c]" />
        </div>
        <svg width="5" height="9" viewBox="0 0 5 9" className="ml-auto mr-[6px]"><path d="M0 0v9l5-4.500z" fill="#444" /></svg>
      </div>
      <span className="mr-[20px] w-[6px] border border-[#7d838c] bg-white" />
    </div>
  </div>
);

const StatusBar = () => (
  <div className="flex h-[21px] items-center bg-gradient-to-b from-[#e3e5e9] to-[#b9bdc2] text-[11px] text-[#333]">
    <span className="w-[57px] pl-[8px]">Готово</span>
    <span className="h-full w-px bg-[#8f959d]" />
    <span className="ml-auto h-full w-px bg-[#8f959d]" />
    <button aria-label="Обычный" className="ml-[4px] flex h-[19px] w-[19px] items-center justify-center rounded-[3px] border border-[#c29b3f] bg-[#ffe07a]">
      <svg width="13" height="11" viewBox="0 0 13 11" shapeRendering="crispEdges"><path d="M.5.500h12v10H.5zM0 3.500h13M0 7.500h13M4.500 0v11M8.500 0v11" fill="#fff" stroke="#555" /></svg>
    </button>
    <button aria-label="Разметка страницы" className="ml-[2px]">
      <svg width="14" height="12" viewBox="0 0 14 12" shapeRendering="crispEdges"><path d="M.5.500h13v11H.5z" fill="#a8acb1" stroke="#555" /><path d="M3.500 2.500h7v7h-7z" fill="#fff" stroke="#555" /><path d="M5 4.500h4M5 6.500h4" stroke="#777" /></svg>
    </button>
    <button aria-label="Страничный режим" className="ml-[5px]">
      <svg width="14" height="12" viewBox="0 0 14 12" shapeRendering="crispEdges"><path d="M.5.500h13v11H.5z" fill="#a8acb1" stroke="#555" /><path d="M1 1h4v6H1zM6 1h3v6H6z" fill="#fff" /><path d="M5.500 1v6M9.500 1v6M1 7.500h9" stroke="#555" /></svg>
    </button>
    <button className="ml-[11px] w-[29px]">100%</button>
    <button aria-label="Уменьшить" className="ml-[7px] flex h-[16px] w-[16px] items-center justify-center rounded-full border border-[#666] bg-[#f1f2f4]">
      <span className="h-[2px] w-[8px] bg-[#444]" />
    </button>
    <input
      type="range"
      aria-label="Масштаб"
      defaultValue={50}
      className="h-[14px] w-[100px] appearance-none bg-transparent bg-[linear-gradient(#7f858d,#7f858d)] bg-[length:100%_1px] bg-center bg-no-repeat [&::-webkit-slider-thumb]:h-[13px] [&::-webkit-slider-thumb]:w-[9px] [&::-webkit-slider-thumb]:appearance-none [&::-webkit-slider-thumb]:rounded-b-[4px] [&::-webkit-slider-thumb]:border [&::-webkit-slider-thumb]:border-[#666] [&::-webkit-slider-thumb]:bg-[#f1f2f4]"
    />
    <button aria-label="Увеличить" className="mr-[4px] flex h-[16px] w-[16px] items-center justify-center rounded-full border border-[#666] bg-[#f1f2f4]">
      <svg width="8" height="8" viewBox="0 0 8 8"><path d="M4 0v8M0 4h8" stroke="#444" strokeWidth="2" /></svg>
    </button>
  </div>
);

const TASKS = [
  { icon: <WordIcon />, label: "ЭММ_методичка_ч_..." },
  { icon: <WordIcon />, label: "t000905.doc [Режим ..." },
  { icon: <WordIcon />, label: "Лабораторная рабо..." },
  { icon: <ExcelIcon />, label: "Microsoft Excel (Сбой...", active: true },
  { icon: <FolderIcon />, label: "лабораторные работы" },
  { icon: <FirefoxIcon />, label: "Голос страны\\Голос..." },
];

const Taskbar = () => (
  <footer className="flex h-[30px] items-center bg-gradient-to-b from-[#1f55c8] via-[#2763e0] to-[#1e4fbd] text-[11px] text-white shadow-[inset_0_2px_1px_#4a96ee]">
    <button className="flex h-full w-[96px] items-center gap-[4px] rounded-r-[10px] bg-gradient-to-b from-[#5aa657] via-[#358a35] to-[#2f7f2e] pl-[10px] text-[18px] font-bold italic leading-[20px] shadow-[inset_-3px_-2px_5px_#1d5f20,inset_0_2px_2px_#8fcf8a]">
      <WindowsFlag />
      пуск
    </button>
    <div className="ml-[9px] flex min-w-0 flex-1 gap-px pt-[2px]">
      {TASKS.map((task) => (
        <button
          key={task.label}
          className={clsx(
            "flex h-[24px] w-[159px] items-center gap-[4px] overflow-hidden whitespace-nowrap rounded-[2px] pl-[10px]",
            task.active
              ? "bg-[#1b49ab] shadow-[inset_1px_1px_2px_#0f2f7c]"
              : "bg-gradient-to-b from-[#3a7ff0] to-[#3b78ec] shadow-[inset_1px_1px_1px_#6aa3fb,inset_-1px_-1px_1px_#2456c0]",
          )}
        >
          {task.icon}
          {task.label}
        </button>
      ))}
    </div>
    <span className="bg-[#316ac5] px-px leading-[16px]">RU</span>
    <button aria-label="Справка" className="ml-[6px] pt-[2px]">
      <svg width="14" height="16" viewBox="0 0 14 16">
        <path d="M.5.500h12v12h-2v3l-3-3h-7z" fill="#ffffc8" stroke="#000" />
        <path d="M4 5c0-3 5-3 5-.5 0 2-2.500 2-2.500 3.500M6.500 9.500v1.500" fill="none" stroke="#000080" strokeWidth="1.600" />
      </svg>
    </button>
    <span className="ml-[14px] whitespace-nowrap text-[#7fa8ea]">Рабочий стол</span>
    <span className="mb-[12px] ml-[5px] text-[15px] leading-[12px] text-[#bcd3fa]">»</span>
    <div className="ml-[14px] flex h-full w-[74px] shrink-0 items-center border-l border-[#1042af] bg-gradient-to-b from-[#1283e4] via-[#189df0] to-[#117fd8] shadow-[inset_0_2px_1px_#35c0f8]">
      <button aria-label="Показать значки" className="-ml-[10px] flex h-[19px] w-[19px] shrink-0 items-center justify-center rounded-full border border-[#a8d4fa] bg-[#1f76dd]">
        <svg width="6" height="9" viewBox="0 0 6 9"><path d="M5 .500l-4 4 4 4" fill="none" stroke="#fff" strokeWidth="2" /></svg>
      </button>
      <svg width="16" height="17" viewBox="0 0 16 17" className="ml-px shrink-0">
        <path d="M5 1h6v8h4l-7 7.500L1 9h4z" fill="#86c80e" stroke="#4f8a06" />
        <path d="M2.500 1C1 3 1 4 2.500 6M13.500 1c1.500 2 1.500 3 0 5" fill="none" stroke="#c3e6fa" />
      </svg>
      <time className="ml-[6px]">17:09</time>
    </div>
  </footer>
);

export default function App() {
  return (
    <div className="flex min-h-screen flex-col overflow-hidden bg-[#d5d9de] font-['Open_Sans','Noto_Sans',sans-serif]">
      <TitleBar />
      <TabBar />
      <Ribbon />
      <FormulaBar />
      <div className="h-[4px] border-b border-[#8b9097] bg-[#eceff6]" />
      <main className="relative flex flex-1">
        <div className="min-w-0 flex-1 overflow-hidden bg-white">
          <Sheet />
        </div>
        <VerticalScroll />
        <button
          aria-label="Открыть панель"
          className="absolute left-0 top-[197px] flex h-[133px] w-[12px] items-center rounded-r-[7px] border-2 border-l-0 border-[#eceef0]/50 bg-gradient-to-r from-[#777]/80 to-[#999]/20 shadow-[0_0_1px_#666]"
        >
          <svg width="6" height="10" viewBox="0 0 6 10" className="ml-px shrink-0"><path d="M0 0v10l5-5z" fill="#fff" /></svg>
        </button>
      </main>
      <SheetTabs />
      <StatusBar />
      <Taskbar />
    </div>
  );
}
